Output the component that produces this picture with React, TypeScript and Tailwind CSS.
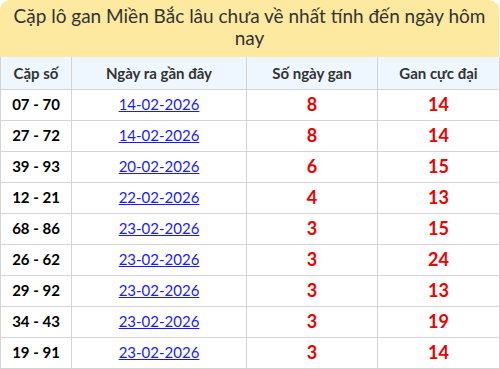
import React from 'react';

const rows = [
  { pair: '07 - 70', date: '14-02-2026', days: 8, max: 14 },
  { pair: '27 - 72', date: '14-02-2026', days: 8, max: 14 },
  { pair: '39 - 93', date: '20-02-2026', days: 6, max: 15 },
  { pair: '12 - 21', date: '22-02-2026', days: 4, max: 13 },
  { pair: '68 - 86', date: '23-02-2026', days: 3, max: 15 },
  { pair: '26 - 62', date: '23-02-2026', days: 3, max: 24 },
  { pair: '29 - 92', date: '23-02-2026', days: 3, max: 13 },
  { pair: '34 - 43', date: '23-02-2026', days: 3, max: 19 },
  { pair: '19 - 91', date: '23-02-2026', days: 3, max: 14 },
];

export default function App() {
  return (
    <div className="w-[499px] bg-white" style={{ fontFamily: 'Lato, "Noto Sans", sans-serif' }}>
      <div className="bg-[#fde9a0] rounded-t-[10px] h-[57px] px-[6px] pt-[5px] text-center text-[19px] leading-[22px] text-[#333]">
        Cặp lô gan Miền Bắc lâu chưa về nhất tính đến ngày hôm
        <br />
        nay
      </div>
      <table className="w-full border-collapse table-fixed">
        <colgroup>
          <col className="w-[71px]" />
          <col className="w-[175px]" />
          <col className="w-[131px]" />
          <col className="w-[122px]" />
        </colgroup>
        <thead>
          <tr className="bg-[#eef6ff] h-[32px] text-[15px] font-bold text-[#333]">
            <th className="border-x border-[#d4d4d4]">Cặp số</th>
            <th className="border-x border-[#d4d4d4]">Ngày ra gần đây</th>
            <th className="border-x border-[#d4d4d4]">Số ngày gan</th>
            <th className="border-x border-[#d4d4d4]">Gan cực đại</th>
          </tr>
        </thead>
        <tbody>
          {rows.map((r) => (
            <tr key={r.pair} className="h-[31px] text-center">
              <td className="border border-[#d4d4d4] text-[15px] font-bold text-black">{r.pair}</td>
              <td className="border border-[#d4d4d4] text-[15px]">
                <a href="#" className="text-[#1a1aff] underline">{r.date}</a>
              </td>
              <td className="border border-[#d4d4d4] text-[18px] font-bold text-[#ee0000]">{r.days}</td>
              <td className="border border-[#d4d4d4] text-[18px] font-bold text-[#ee0000]">{r.max}</td>
            </tr>
          ))}
        </tbody>
      </table>
    </div>
  );
}
